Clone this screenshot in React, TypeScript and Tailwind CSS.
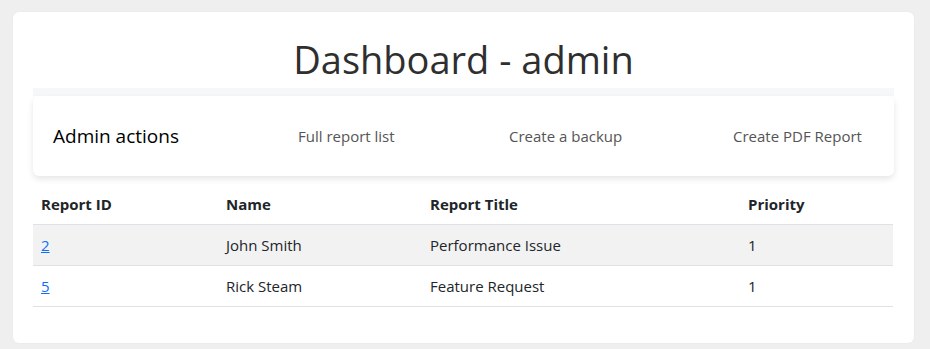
import React from "react";

const rows = [
  { id: "2", name: "John Smith", title: "Performance Issue", priority: "1" },
  { id: "5", name: "Rick Steam", title: "Feature Request", priority: "1" },
];

export default function App() {
  return (
    <div
      className="min-h-[349px] bg-[#efefef] pt-3 pl-[13px] pr-4 pb-[6px]"
      style={{ fontFamily: '"Open Sans", "Noto Sans", sans-serif' }}
    >
      <div className="h-[331px] rounded-md bg-white px-5 shadow-[0_0_2px_rgba(0,0,0,0.06)]">
        <h1 className="pt-[19px] pb-[1px] text-center text-[38px] leading-[56px] text-[#2f2f2f]">
          Dashboard - admin
        </h1>
        <div className="h-2 bg-[#f6f7f9]" />
        <div className="flex h-[80px] items-center rounded-md bg-white px-5 leading-[24px] shadow-[0_3px_6px_rgba(0,0,0,0.1)]">
          <div className="w-[245px] text-[19px] text-black">Admin actions</div>
          <div className="w-[211px] text-[15px] text-[#555]">Full report list</div>
          <div className="w-[224px] text-[15px] text-[#555]">Create a backup</div>
          <div className="text-[15px] text-[#555]">Create PDF Report</div>
        </div>
        <table className="mt-2 w-[860px] border-collapse text-[15px] leading-[22px] text-[#212529]">
          <thead>
            <tr className="border-b border-[#dee2e6]">
              <th className="w-[185px] px-2 py-[9px] text-left font-bold">Report ID</th>
              <th className="w-[204px] px-2 py-[9px] text-left font-bold">Name</th>
              <th className="w-[318px] px-2 py-[9px] text-left font-bold">Report Title</th>
              <th className="px-2 py-[9px] text-left font-bold">Priority</th>
            </tr>
          </thead>
          <tbody>
            {rows.map((r, i) => (
              <tr
                key={r.id}
                className={`border-b border-[#dee2e6] ${i === 0 ? "bg-[#f2f2f2]" : "bg-white"}`}
              >
                <td className="h-[41px] px-2">
                  <a href="#" className="text-[#0d6efd] underline">
                    {r.id}
                  </a>
                </td>
                <td className="px-2">{r.name}</td>
                <td className="px-2">{r.title}</td>
                <td className="px-2">{r.priority}</td>
              </tr>
            ))}
          </tbody>
        </table>
      </div>
    </div>
  );
}
